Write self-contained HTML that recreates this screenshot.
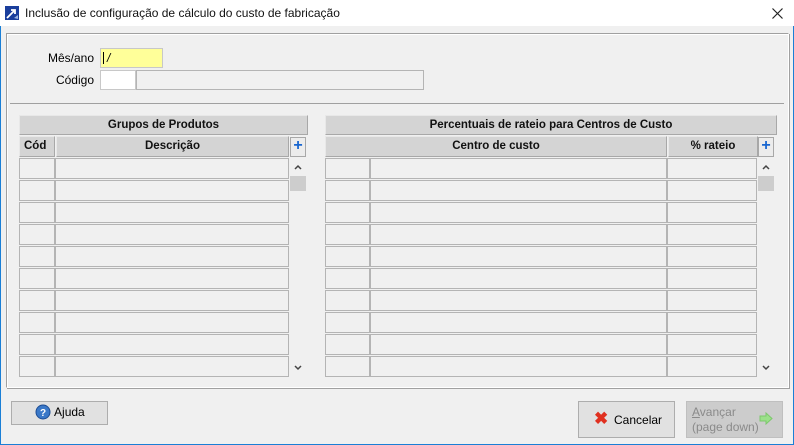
<!DOCTYPE html>
<html><head><meta charset="utf-8"><style>
*{box-sizing:border-box;margin:0;padding:0}
body{width:794px;height:445px;position:relative;overflow:hidden;background:#f0f0f0;font-family:"Liberation Sans",sans-serif;font-size:12px;color:#000}
.a{position:absolute}
.win{left:0;top:0;width:794px;height:445px;border:1px solid #1a7fd6;border-top:none}
.title{left:0;top:0;width:794px;height:26px;background:#fff}
.hdr{background:#d4d4d4;border:1px solid #a8a8a8;border-top-color:#e8e8e8;border-left-color:#e8e8e8;font-weight:bold;text-align:center;line-height:18px;font-size:11.5px;color:#111}
.cell{border:1px solid #b4b4b4;background:#f0f0f0}
.plus{border:1px solid #a8a8a8;background:#ececec;color:#1866d0;font-weight:bold;text-align:center;font-size:16px;line-height:16px}
.btn{border:1px solid #adadad;background:#e1e1e1}
</style></head><body>
<div class="a win"></div>
<div class="a title"></div>
<svg class="a" style="left:5px;top:6px" width="14" height="14"><rect width="14" height="14" fill="#1a3e9c"/><path d="M2 12 L9 5 M6 4 L10 4 L10 8" stroke="#fff" stroke-width="1.8" fill="none"/><path d="M9 12 L13 9 L13 13 Z" fill="#9ab4e4"/></svg>
<div class="a" style="left:25px;top:6px;font-size:12px;color:#111">Inclusão de configuração de cálculo do custo de fabricação</div>
<svg class="a" style="left:772px;top:8px" width="11" height="11"><path d="M0.5 0.5 L10.5 10.5 M10.5 0.5 L0.5 10.5" stroke="#222" stroke-width="1.2"/></svg>

<div class="a" style="left:6px;top:33px;width:783px;height:355px;border:1px solid #a0a0a0;border-right-color:#fff;border-bottom-color:#fff;box-shadow:inset 1px 1px 0 #fff,1px 1px 0 #a0a0a0"></div>

<div class="a" style="left:40px;top:51px;width:54px;text-align:right">Mês/ano</div>
<div class="a" style="left:100px;top:48px;width:63px;height:20px;background:#ffff99;border:1px solid #c8c8c8"><span class="a" style="left:2px;top:3px;width:1px;height:12px;background:#000"></span><span class="a" style="left:6px;top:2px;font-style:italic">/</span></div>
<div class="a" style="left:40px;top:73px;width:54px;text-align:right">Código</div>
<div class="a" style="left:100px;top:70px;width:36px;height:20px;background:#fff;border:1px solid #c8c8c8"></div>
<div class="a" style="left:136px;top:70px;width:288px;height:20px;background:#f0f0f0;border:1px solid #b4b4b4"></div>
<div class="a" style="left:10px;top:103px;width:774px;height:1px;background:#a0a0a0"></div>

<div class="a hdr" style="left:19px;top:115px;width:289px;height:20px">Grupos de Produtos</div>
<div class="a hdr" style="left:19px;top:136px;width:36px;height:21px;text-align:left;padding-left:4px">Cód</div>
<div class="a hdr" style="left:56px;top:136px;width:233px;height:21px">Descrição</div>
<div class="a plus" style="left:290px;top:137px;width:16px;height:20px">+</div>

<div class="a hdr" style="left:325px;top:115px;width:452px;height:20px">Percentuais de rateio para Centros de Custo</div>
<div class="a hdr" style="left:325px;top:136px;width:342px;height:21px">Centro de custo</div>
<div class="a hdr" style="left:668px;top:136px;width:90px;height:21px">% rateio</div>
<div class="a plus" style="left:758px;top:137px;width:16px;height:20px">+</div>

<div id="rows"></div>
<svg class="a" style="left:294px;top:164px" width="8" height="6"><path d="M1 5 L4 2 L7 5" stroke="#444" stroke-width="1.5" fill="none"/></svg>
<div class="a" style="left:290px;top:176px;width:16px;height:15px;background:#cdcdcd"></div>
<svg class="a" style="left:294px;top:365px" width="8" height="6"><path d="M1 1 L4 4 L7 1" stroke="#444" stroke-width="1.5" fill="none"/></svg>
<svg class="a" style="left:762px;top:164px" width="8" height="6"><path d="M1 5 L4 2 L7 5" stroke="#444" stroke-width="1.5" fill="none"/></svg>
<div class="a" style="left:758px;top:176px;width:16px;height:15px;background:#cdcdcd"></div>
<svg class="a" style="left:762px;top:365px" width="8" height="6"><path d="M1 1 L4 4 L7 1" stroke="#444" stroke-width="1.5" fill="none"/></svg>

<div class="a btn" style="left:11px;top:401px;width:97px;height:24px"></div>
<svg class="a" style="left:35px;top:404px" width="16" height="16"><circle cx="8" cy="8" r="7" fill="#3a78c8" stroke="#1c4c94"/><text x="8" y="12" font-size="10" font-weight="bold" fill="#fff" text-anchor="middle" font-family="Liberation Sans">?</text></svg>
<div class="a" style="left:54px;top:405px">A<u>j</u>uda</div>

<div class="a btn" style="left:578px;top:401px;width:97px;height:37px"></div>
<div class="a" style="left:594px;top:410px;color:#e03020;font-size:17px;font-weight:bold;line-height:17px">✖</div>
<div class="a" style="left:614px;top:413px">Cancelar</div>
<div class="a" style="left:686px;top:401px;width:97px;height:37px;background:#cccccc;border:1px solid #bfbfbf"></div>
<div class="a" style="left:692px;top:405px;color:#8a8a8a;line-height:15px"><u>A</u>vançar<br>(page down)</div>
<svg class="a" style="left:759px;top:412px" width="14" height="13"><path d="M1 4 H7 V1 L13 6.5 L7 12 V9 H1 Z" fill="#9be08a" stroke="#7cc86c"/></svg>

<script>
var h='';
for(var i=0;i<10;i++){var y=158+i*22;
h+='<div class="a cell" style="left:19px;top:'+y+'px;width:36px;height:21px"></div>';
h+='<div class="a cell" style="left:55px;top:'+y+'px;width:234px;height:21px"></div>';
h+='<div class="a cell" style="left:325px;top:'+y+'px;width:45px;height:21px"></div>';
h+='<div class="a cell" style="left:370px;top:'+y+'px;width:297px;height:21px"></div>';
h+='<div class="a cell" style="left:667px;top:'+y+'px;width:90px;height:21px"></div>';}
document.getElementById('rows').innerHTML=h;
</script>
</body></html>
